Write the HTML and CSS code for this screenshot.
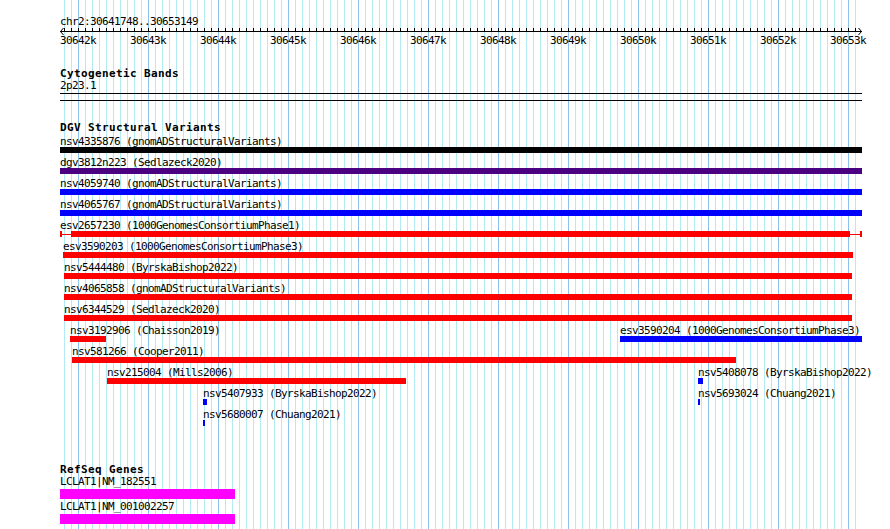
FILE: index.html
```html
<!DOCTYPE html>
<html lang="en">
<head>
    <meta charset="UTF-8">
    <meta name="viewport" content="width=device-width, initial-scale=1.0">
    <title>chr2:30641748..30653149</title>
    <link rel="stylesheet" href="styles.css">
</head>
<body>
<div class="page">

    <div class="ruler">
        <div class="position">chr2:30641748..30653149</div>
        <svg class="axis" width="802" height="20" viewBox="0 0 802 20">
            <defs>
                <pattern id="ticks" x="4" y="0" width="7" height="20" patternUnits="userSpaceOnUse">
                    <line x1="0.5" y1="1" x2="0.5" y2="5" stroke="#000" stroke-width="1"/>
                </pattern>
            </defs>
            <line x1="0" y1="4.5" x2="802" y2="4.5" stroke="#000" stroke-width="1"/>
            <rect x="4" y="0" width="794" height="5" fill="url(#ticks)"/>
            <polyline points="3.5,1 0.5,4.5 3.5,8" fill="none" stroke="#000" stroke-width="1"/>
            <polyline points="798.5,1 801.5,4.5 798.5,8" fill="none" stroke="#000" stroke-width="1"/>
            <g class="axis-labels" text-anchor="middle">
                <text x="18" y="17">30642k</text>
                <text x="88" y="17">30643k</text>
                <text x="158" y="17">30644k</text>
                <text x="228" y="17">30645k</text>
                <text x="298" y="17">30646k</text>
                <text x="368" y="17">30647k</text>
                <text x="438" y="17">30648k</text>
                <text x="508" y="17">30649k</text>
                <text x="578" y="17">30650k</text>
                <text x="648" y="17">30651k</text>
                <text x="718" y="17">30652k</text>
                <text x="788" y="17">30653k</text>
            </g>
        </svg>
    </div>

    <!-- cytobands -->
    <div class="track cytoband">
        <div class="track-title">Cytogenetic Bands</div>
        <div class="band-label">2p23.1</div>
        <div class="band"></div>
    </div>

    <!-- DGV -->
    <div class="track dgv">
        <div class="track-title">DGV Structural Variants</div>
        <div class="rows">
            <div class="row">
                <div class="feature" style="left:0px">
                    <div class="label">nsv4335876 (gnomADStructuralVariants)</div>
                    <div class="bar black" style="width:802px"></div>
                </div>
            </div>
            <div class="row">
                <div class="feature" style="left:0px">
                    <div class="label">dgv3812n223 (Sedlazeck2020)</div>
                    <div class="bar purple" style="width:802px"></div>
                </div>
            </div>
            <div class="row">
                <div class="feature" style="left:0px">
                    <div class="label">nsv4059740 (gnomADStructuralVariants)</div>
                    <div class="bar blue" style="width:802px"></div>
                </div>
            </div>
            <div class="row">
                <div class="feature" style="left:0px">
                    <div class="label">nsv4065767 (gnomADStructuralVariants)</div>
                    <div class="bar blue" style="width:802px"></div>
                </div>
            </div>
            <div class="row">
                <div class="feature" style="left:0px">
                    <div class="label">esv2657230 (1000GenomesConsortiumPhase1)</div>
                    <div class="bar span" style="width:802px">
                        <div class="thick" style="margin-left:9px;width:779px"></div>
                    </div>
                </div>
            </div>
            <div class="row">
                <div class="feature" style="left:3px">
                    <div class="label">esv3590203 (1000GenomesConsortiumPhase3)</div>
                    <div class="bar red" style="width:790px"></div>
                </div>
            </div>
            <div class="row">
                <div class="feature" style="left:4px">
                    <div class="label">nsv5444480 (ByrskaBishop2022)</div>
                    <div class="bar red" style="width:788px"></div>
                </div>
            </div>
            <div class="row">
                <div class="feature" style="left:4px">
                    <div class="label">nsv4065858 (gnomADStructuralVariants)</div>
                    <div class="bar red" style="width:788px"></div>
                </div>
            </div>
            <div class="row">
                <div class="feature" style="left:4px">
                    <div class="label">nsv6344529 (Sedlazeck2020)</div>
                    <div class="bar red" style="width:788px"></div>
                </div>
            </div>
            <div class="row">
                <div class="feature" style="left:10px">
                    <div class="label">nsv3192906 (Chaisson2019)</div>
                    <div class="bar red" style="width:36px"></div>
                </div>
                <div class="feature" style="left:560px">
                    <div class="label">esv3590204 (1000GenomesConsortiumPhase3)</div>
                    <div class="bar blue" style="width:242px"></div>
                </div>
            </div>
            <div class="row">
                <div class="feature" style="left:12px">
                    <div class="label">nsv581266 (Cooper2011)</div>
                    <div class="bar red" style="width:664px"></div>
                </div>
            </div>
            <div class="row">
                <div class="feature" style="left:47px">
                    <div class="label">nsv215004 (Mills2006)</div>
                    <div class="bar red" style="width:299px"></div>
                </div>
                <div class="feature" style="left:638px">
                    <div class="label">nsv5408078 (ByrskaBishop2022)</div>
                    <div class="bar blue" style="width:5px"></div>
                </div>
            </div>
            <div class="row">
                <div class="feature" style="left:143px">
                    <div class="label">nsv5407933 (ByrskaBishop2022)</div>
                    <div class="bar blue" style="width:4px"></div>
                </div>
                <div class="feature" style="left:638px">
                    <div class="label">nsv5693024 (Chuang2021)</div>
                    <div class="bar blue" style="width:2px"></div>
                </div>
            </div>
            <div class="row">
                <div class="feature" style="left:143px">
                    <div class="label">nsv5680007 (Chuang2021)</div>
                    <div class="bar blue" style="width:2px"></div>
                </div>
            </div>
        </div>
    </div>

    <!-- RefSeq -->
    <div class="track refseq">
        <div class="track-title">RefSeq Genes</div>
        <div class="gene">
            <div class="label">LCLAT1|NM_182551</div>
            <div class="gene-bar" style="width:175px"></div>
        </div>
        <div class="gene">
            <div class="label">LCLAT1|NM_001002257</div>
            <div class="gene-bar" style="width:175px"></div>
        </div>
    </div>

</div>
</body>
</html>
```

FILE: styles.css
```css
body {
    margin: 0;
    background: #fff;
}

.page {
    margin-left: 60px;
    width: 802px;
    height: 529px;
    font-family: "DejaVu Sans Mono", monospace;
    font-size: 11px;
    line-height: 11px;
    letter-spacing: -0.62px;
    color: #000;
    /* guidelines: dark every 1kb, light every 100bp */
    background-image:
        linear-gradient(to right, #8ec2ee 1px, transparent 1px),
        linear-gradient(to right, #b2ecf2 1px, transparent 1px);
    background-size: 70px 100%, 7px 100%;
    background-position: 18px 0, 4px 0;
    background-repeat: repeat-x;
}

.ruler {
    padding-top: 16px;
}

.position {
    white-space: nowrap;
}

.axis {
    display: block;
    overflow: visible;
}

.axis-labels text {
    font-family: "DejaVu Sans Mono", monospace;
    font-size: 11px;
    letter-spacing: -0.62px;
    fill: #000;
}

.track {
    margin-top: 21px;
}

.refseq {
    margin-top: 36px;
}

.track-title {
    font-weight: bold;
    letter-spacing: 0.38px;
    white-space: nowrap;
}

.band-label {
    margin-top: 1px;
}

.band {
    margin-top: 2px;
    height: 6px;
    border-top: 1px solid #000;
    border-bottom: 1px solid #000;
}

.rows {
    margin-top: 1px;
}

.row {
    position: relative;
    height: 21px;
}

.feature {
    position: absolute;
    top: 0;
}

.label {
    margin-top: 2px;
    white-space: nowrap;
}

.bar {
    height: 6px;
}

.black { background: #000; }
.purple { background: #4b0082; }
.blue { background: #0000ff; }
.red { background: #ff0000; }

.span {
    box-sizing: border-box;
    border-left: 2px solid #ff0000;
    border-right: 2px solid #ff0000;
    background: linear-gradient(#ff0000, #ff0000) 0 3px / 100% 1px no-repeat;
}

.thick {
    height: 6px;
    background: #ff0000;
}

.gene {
    height: 24px;
}

.gene .label {
    margin-top: 1px;
}

.gene-bar {
    margin-top: 2px;
    height: 10px;
    background: #ff00ff;
}
```
